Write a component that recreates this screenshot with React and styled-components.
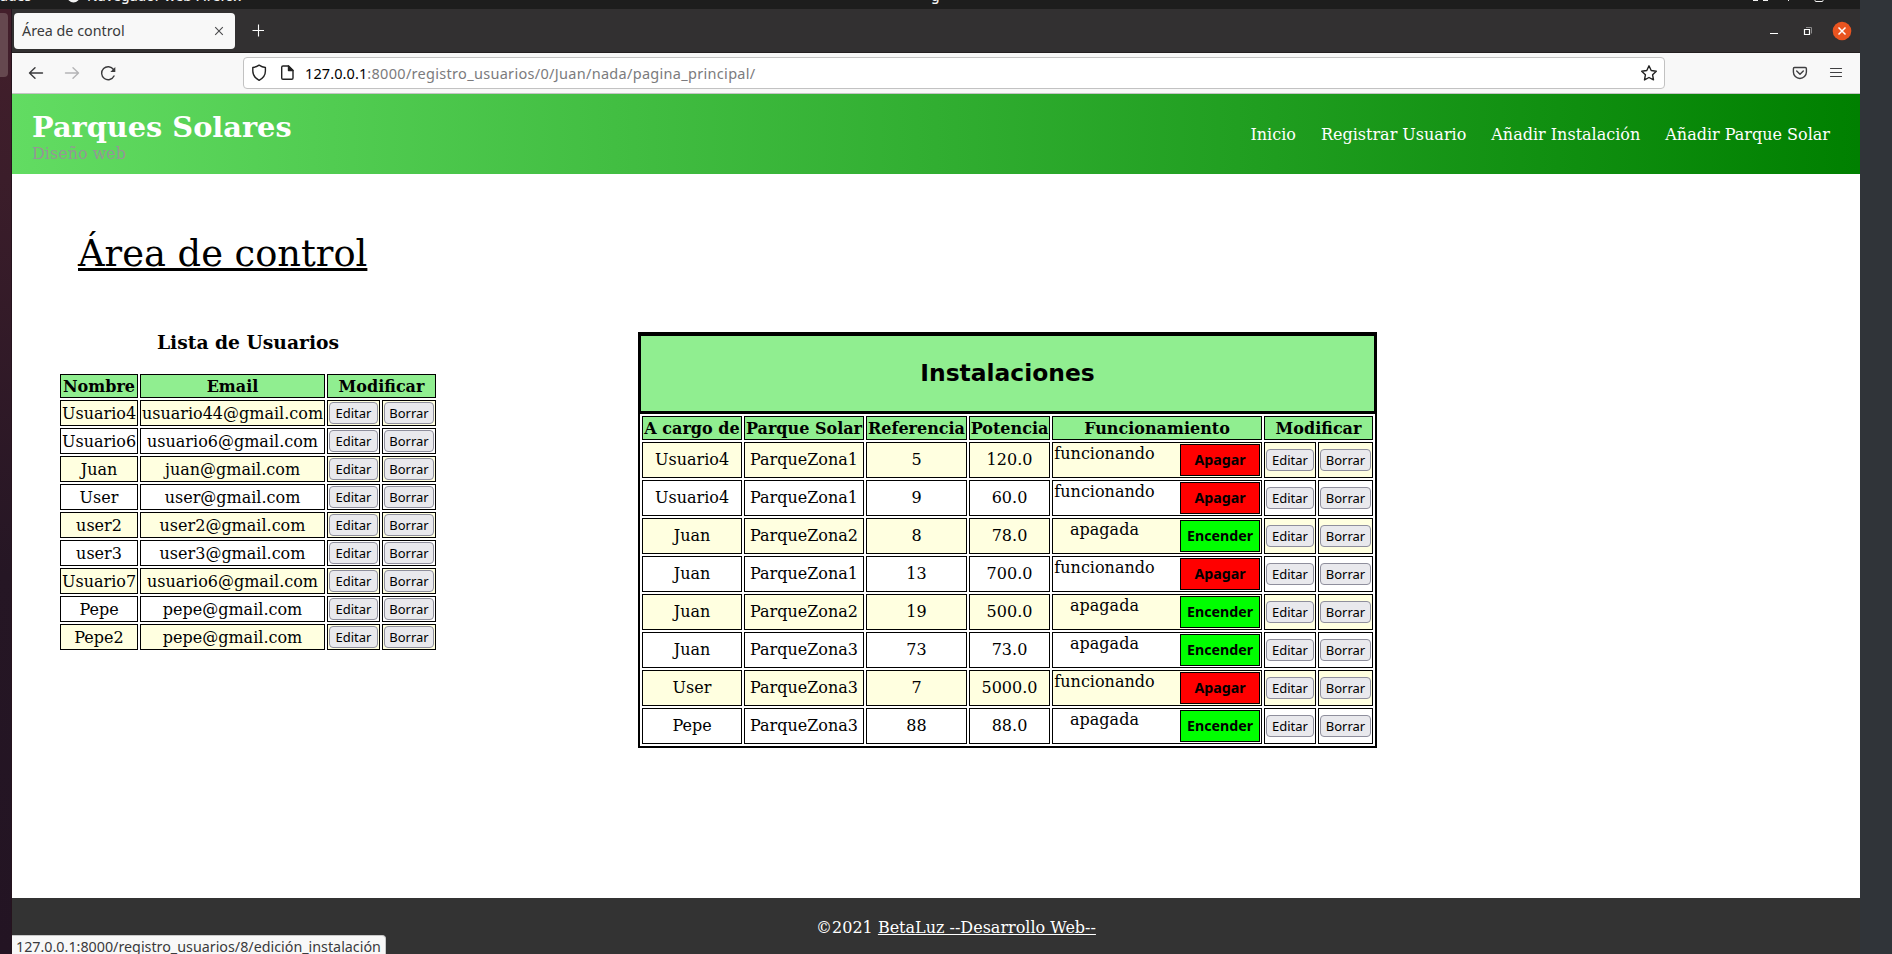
import React from "react";
import styled, { createGlobalStyle } from "styled-components";

const SERIF = '"DejaVu Serif", serif';
const UI = '"Noto Sans", "Open Sans", sans-serif';

const GlobalStyle = createGlobalStyle`
  * { box-sizing: border-box; }
  body { margin: 0; overflow: hidden; background: #fff; font: 16px/19px ${SERIF}; color: #000; }
`;

const Desktop = styled.div`
  display: flex;
  flex-direction: column;
  width: 1892px;
  height: 954px;
  overflow: hidden;
`;
const SystemBar = styled.div`
  display: flex;
  flex: none;
  width: 1860px;
  height: 9px;
  overflow: hidden;
  background: #1d1d1d;
  color: #f2f2f2;
  font: 500 13.9px/20px ${UI};
  white-space: pre;
`;
const SystemText = styled.span`
  flex: none;
  width: ${(p) => p.$w}px;
  height: 20px;
  margin-top: -14px;
  margin-left: ${(p) => p.$gap || 0}px;
  text-align: ${(p) => p.$align || "left"};
`;
const AppDot = styled.svg`
  flex: none;
  margin-left: 35px;
`;
const SystemIcons = styled.svg`
  flex: none;
  margin-left: auto;
`;
const Body = styled.div`
  display: flex;
  flex: 1;
  min-height: 0;
`;
const Dock = styled.div`
  flex: none;
  width: 12px;
  padding-top: 4px;
  background: linear-gradient(#431f2b 0, #3b1d2a 18%, #251624 60%, #231423 100%);
  border-right: 1px solid #25131d;
`;
const DockItem = styled.div`
  width: 8px;
  height: 64px;
  border-radius: 0 4px 4px 0;
  background: #65484f;
`;
const Side = styled.div`
  flex: none;
  width: 32px;
  margin-top: -9px;
  background: #303439;
`;
const Browser = styled.div`
  position: relative;
  display: flex;
  flex-direction: column;
  width: 1848px;
`;
const TabBar = styled.div`
  display: flex;
  align-items: center;
  flex: none;
  height: 44px;
  padding: 0 8px 0 2px;
  background: #323031;
  border-bottom: 1px solid #231f20;
`;
const Tab = styled.div`
  display: flex;
  align-items: center;
  justify-content: space-between;
  width: 221px;
  height: 36px;
  padding: 0 11px 0 8px;
  border-radius: 4px;
  background: #f8f8f8;
  color: #3a3a3c;
  font: 14.3px/20px ${UI};
`;
const NewTab = styled.svg`
  margin-left: 17px;
`;
const WindowButtons = styled.svg`
  margin-left: auto;
`;
const Toolbar = styled.div`
  display: flex;
  align-items: center;
  flex: none;
  height: 41px;
  background: #f8f8f8;
  border-bottom: 1px solid #c4c4c4;
`;
const NavIcons = styled.svg`
  flex: none;
  margin-left: 12px;
`;
const UrlBar = styled.div`
  display: flex;
  align-items: center;
  width: 1422px;
  height: 32px;
  margin-left: 127px;
  padding: 0 6px 0 7px;
  border: 1px solid #c2c2c2;
  border-radius: 4px;
  background: #fff;
`;
const UrlText = styled.span`
  flex: 1;
  margin-left: 10px;
  color: #7b7b7d;
  font: 14.5px/20px ${UI};
  letter-spacing: 0.3px;
`;
const Host = styled.span`
  color: #000;
  letter-spacing: 0.1px;
`;
const ToolIcons = styled.svg`
  margin-left: auto;
`;

const SiteHeader = styled.header`
  display: flex;
  justify-content: space-between;
  flex: none;
  height: 80px;
  padding: 16px 30px 0 20px;
  background: linear-gradient(90deg, #62dc62, #008000);
`;
const Brand = styled.div`
  color: #969696;
`;
const BrandTitle = styled.h1`
  margin: 0;
  color: #fff;
  font-size: 28.8px;
  line-height: 34px;
`;
const SiteNav = styled.nav`
  display: flex;
  gap: 25px;
  padding-top: 15px;
  color: #fff;
`;
const Main = styled.main`
  flex: 1;
  min-height: 0;
  padding: 58px 0 0 46px;
`;
const PageTitle = styled.h2`
  margin: 0 0 56px 20px;
  font-size: 36.8px;
  font-weight: 400;
  line-height: 43px;
  text-decoration: underline;
`;
const Columns = styled.div`
  display: flex;
  align-items: flex-start;
`;
const Users = styled.section`
  width: 380px;
`;
const UsersTitle = styled.h3`
  margin: 0 0 19px;
  font-size: 18.72px;
  line-height: 22px;
  text-align: center;
`;
const Installations = styled.section`
  width: 739px;
  margin-left: 200px;
  margin-top: 1px;
`;
const Caption = styled.h2`
  margin: 0;
  height: 82px;
  padding-top: 23px;
  border: solid #000;
  border-width: 4px 3px 3px;
  background: #90ee90;
  font: bold 23.4px/28px "DejaVu Sans", sans-serif;
  text-align: center;
`;
const Table = styled.table`
  width: 100%;
  table-layout: fixed;
  border-collapse: separate;
  border-spacing: 2px;
  border: ${(p) => (p.$framed ? "solid #000" : "none")};
  border-width: ${(p) => (p.$framed ? "0 2px 2px" : "0")};
  text-align: center;
  white-space: nowrap;
`;
const Col = styled.col`
  width: ${(p) => p.$w}px;
`;
const HeadCell = styled.th`
  height: 24px;
  padding: 0;
  border: 1px solid #000;
  background: #90ee90;
  font-weight: bold;
`;
const Row = styled.tr`
  height: ${(p) => p.$h}px;
  &:nth-child(odd) { background: #ffffe0; }
`;
const Cell = styled.td`
  padding: 0 0 ${(p) => p.$lift || 0}px;
  border: 1px solid #000;
  background: inherit;
`;
const ActionCell = styled(Cell)`
  padding: 0 1px;
`;
const Action = styled.button`
  display: block;
  width: 100%;
  height: 22px;
  padding: 0;
  border: 1px solid #8f8f9d;
  border-radius: 4px;
  background: #e9e9ed;
  color: #000;
  font: 13px/20px ${UI};
`;
const StateLayout = styled.div`
  display: flex;
  justify-content: space-between;
  height: 32px;
  padding: 0 1px;
`;
const StateLabel = styled.span`
  width: 101px;
`;
const Switch = styled.button`
  width: 80px;
  padding: 0;
  border: 1px solid #000;
  background: ${(p) => (p.$on ? "#f00" : "#0f0")};
  color: #000;
  font: bold 14.2px/30px ${UI};
`;
const Footer = styled.footer`
  flex: none;
  height: 56px;
  padding: 20px 0 0 40px;
  background: #333;
  color: #fff;
  text-align: center;
`;
const FooterLink = styled.span`
  text-decoration: underline;
`;
const StatusBubble = styled.div`
  position: absolute;
  left: 0;
  bottom: -3px;
  width: 374px;
  height: 22px;
  padding-left: 4px;
  border: solid #c8c8c8;
  border-width: 1px 1px 0 0;
  border-radius: 0 4px 0 0;
  background: #f8f8f8;
  color: #3a3a3c;
  font: 14.3px/21px ${UI};
  white-space: nowrap;
`;

const users = [
  ["Usuario4", "usuario44@gmail.com"],
  ["Usuario6", "usuario6@gmail.com"],
  ["Juan", "juan@gmail.com"],
  ["User", "user@gmail.com"],
  ["user2", "user2@gmail.com"],
  ["user3", "user3@gmail.com"],
  ["Usuario7", "usuario6@gmail.com"],
  ["Pepe", "pepe@gmail.com"],
  ["Pepe2", "pepe@gmail.com"],
];

const installations = [
  ["Usuario4", "ParqueZona1", "5", "120.0", true],
  ["Usuario4", "ParqueZona1", "9", "60.0", true],
  ["Juan", "ParqueZona2", "8", "78.0", false],
  ["Juan", "ParqueZona1", "13", "700.0", true],
  ["Juan", "ParqueZona2", "19", "500.0", false],
  ["Juan", "ParqueZona3", "73", "73.0", false],
  ["User", "ParqueZona3", "7", "5000.0", true],
  ["Pepe", "ParqueZona3", "88", "88.0", false],
];

function RowActions() {
  return (
    <>
      <ActionCell><Action>Editar</Action></ActionCell>
      <ActionCell><Action>Borrar</Action></ActionCell>
    </>
  );
}

function UsersTable() {
  return (
    <Table>
      <colgroup>{[78, 185, 53, 54].map((w, i) => <Col key={i} $w={w} />)}</colgroup>
      <thead>
        <tr>
          <HeadCell>Nombre</HeadCell>
          <HeadCell>Email</HeadCell>
          <HeadCell colSpan={2}>Modificar</HeadCell>
        </tr>
      </thead>
      <tbody>
        {users.map(([name, email]) => (
          <Row key={name} $h={26}>
            <Cell>{name}</Cell>
            <Cell>{email}</Cell>
            <RowActions />
          </Row>
        ))}
      </tbody>
    </Table>
  );
}

function InstallationsTable() {
  return (
    <Table $framed>
      <colgroup>{[100, 120, 101, 81, 210, 52, 55].map((w, i) => <Col key={i} $w={w} />)}</colgroup>
      <thead>
        <tr>
          {["A cargo de", "Parque Solar", "Referencia", "Potencia", "Funcionamiento"].map((h) => (
            <HeadCell key={h}>{h}</HeadCell>
          ))}
          <HeadCell colSpan={2}>Modificar</HeadCell>
        </tr>
      </thead>
      <tbody>
        {installations.map(([owner, park, ref, power, on]) => (
          <Row key={ref} $h={36}>
            <Cell $lift={2}>{owner}</Cell>
            <Cell $lift={2}>{park}</Cell>
            <Cell $lift={2}>{ref}</Cell>
            <Cell $lift={2}>{power}</Cell>
            <Cell>
              <StateLayout>
                <StateLabel>{on ? "funcionando" : "apagada"}</StateLabel>
                <Switch $on={on}>{on ? "Apagar" : "Encender"}</Switch>
              </StateLayout>
            </Cell>
            <RowActions />
          </Row>
        ))}
      </tbody>
    </Table>
  );
}

export default function App() {
  return (
    <Desktop>
      <GlobalStyle />
      <SystemBar>
        <SystemText $w={31} $align="right">ades</SystemText>
        <AppDot width="14" height="9">
          <circle cx="7.5" cy="-4" r="6.5" fill="#f2f2f2" />
        </AppDot>
        <SystemText $w={844} $gap={7}>Navegador web Firefox</SystemText>
        <SystemText $w={10}>g</SystemText>
        <SystemIcons width="110" height="9" stroke="#f2f2f2" fill="none">
          <path d="M3 .5h5M13 .5h5M38.500 0v1M65 0V.5q0 1 1 1h6q1 0 1-1V0" />
        </SystemIcons>
      </SystemBar>
      <Body>
        <Dock><DockItem /></Dock>
        <Browser>
          <TabBar>
            <Tab>
              Área de control
              <svg width="10" height="10" stroke="#4a4a4c" strokeWidth="1.1"><path d="M1.2 1.2l7.6 7.6M8.8 1.2L1.2 8.8" /></svg>
            </Tab>
            <NewTab width="12" height="13" stroke="#fbfbfb" strokeWidth="1.1"><path d="M6.500 .5v12M.5 6.500h12" /></NewTab>
            <WindowButtons width="84" height="21" fill="none">
              <path d="M2 13.500h8" stroke="#fff" />
              <path d="M38 7.500h5.500v6" stroke="#8b8a8b" />
              <path d="M36.500 9.500h5v5h-5z" stroke="#fff" strokeWidth="1.200" />
              <circle cx="74" cy="11" r="9.300" fill="#e95420" />
              <path d="M70.500 7.500l7 7M77.500 7.500l-7 7" stroke="#fff" strokeWidth="1.500" />
            </WindowButtons>
          </TabBar>
          <Toolbar>
            <NavIcons width="92" height="20" fill="none" strokeWidth="1.400" strokeLinecap="round" strokeLinejoin="round">
              <path d="M18.500 10H5.500M11 4.700L5.500 10l5.500 5.300" stroke="#3a3a3c" />
              <path d="M41.500 10h13M49 4.700L54.500 10 49 15.300" stroke="#b4b4b6" />
              <path d="M90 13a6.500 6.500 0 1 1-.5-6.500" stroke="#3a3a3c" />
              <path d="M91.300 4v5h-5z" fill="#3a3a3c" />
            </NavIcons>
            <UrlBar>
              <svg width="44" height="20" fill="none" stroke="#222" strokeWidth="1.400" strokeLinejoin="round">
                <path d="M8.100 2.200q3 2 6.300 2.300v3.500q0 6-6.300 9.300Q1.800 14 1.800 8V4.500Q5 4.200 8.100 2.200z" />
                <path d="M32 3h5.500L42 7.500V15q0 1.300-1.300 1.300H32q-1.300 0-1.300-1.300V4.300Q30.700 3 32 3z" />
                <path d="M37.500 3v4.500H42z" fill="#222" />
              </svg>
              <UrlText><Host>127.0.0.1</Host>:8000/registro_usuarios/0/Juan/nada/pagina_principal/</UrlText>
              <svg width="18" height="18" viewBox="0 0 18 18" fill="none" stroke="#222" strokeWidth="1.400" strokeLinejoin="round">
                <path d="M9 1.800l2.200 4.700 5.100.7-3.700 3.600.9 5.100L9 13.500l-4.500 2.400.9-5.100L1.700 7.200l5.100-.7z" />
              </svg>
            </UrlBar>
            <ToolIcons width="69" height="20" fill="none" stroke="#3f3f41" strokeWidth="1.400" strokeLinecap="round" strokeLinejoin="round">
              <path d="M3.500 4.500h10.700q1.200 0 1.200 1.200V9a6.500 6.500 0 0 1-13 0V5.700q0-1.200 1.100-1.200zM5.700 8l3.300 3.200L12.300 8" />
              <path d="M39.500 5.500h11M39.500 9.500h11M39.500 13.500h11" strokeWidth="1.200" />
            </ToolIcons>
          </Toolbar>
          <SiteHeader>
            <Brand>
              <BrandTitle>Parques Solares</BrandTitle>
              Diseño web
            </Brand>
            <SiteNav>
              <span>Inicio</span>
              <span>Registrar Usuario</span>
              <span>Añadir Instalación</span>
              <span>Añadir Parque Solar</span>
            </SiteNav>
          </SiteHeader>
          <Main>
            <PageTitle>Área de control</PageTitle>
            <Columns>
              <Users>
                <UsersTitle>Lista de Usuarios</UsersTitle>
                <UsersTable />
              </Users>
              <Installations>
                <Caption>Instalaciones</Caption>
                <InstallationsTable />
              </Installations>
            </Columns>
          </Main>
          <Footer>©2021 <FooterLink>BetaLuz --Desarrollo Web--</FooterLink></Footer>
          <StatusBubble>127.0.0.1:8000/registro_usuarios/8/edición_instalación</StatusBubble>
        </Browser>
        <Side />
      </Body>
    </Desktop>
  );
}
